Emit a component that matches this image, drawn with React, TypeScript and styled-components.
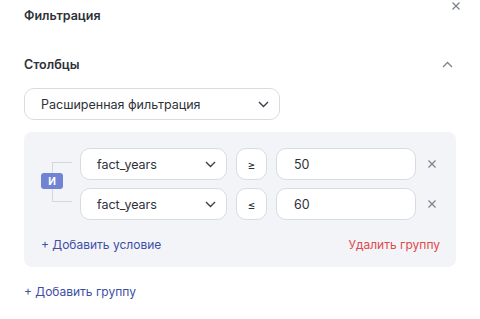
import styled, { createGlobalStyle } from "styled-components";

const GlobalStyle = createGlobalStyle`
  body {
    margin: 0;
    background: #ffffff;
    font-family: Inter, "Noto Sans", sans-serif;
    color: #2e3138;
  }
  * {
    box-sizing: border-box;
  }
`;

const Panel = styled.div`
  width: 480px;
  height: 319px;
  padding: 0 24px;
  display: flex;
  flex-direction: column;
`;

const Header = styled.div`
  display: flex;
  justify-content: space-between;
  align-items: flex-start;
  height: 32px;
`;

const Title = styled.div`
  font-size: 12.5px;
  font-weight: 600;
  line-height: 16px;
  padding-top: 8px;
  color: #2e3138;
`;

const IconButton = styled.button<{ $right?: number; $top?: number }>`
  border: none;
  background: transparent;
  padding: 0;
  margin-top: ${(p) => p.$top ?? 0}px;
  margin-right: ${(p) => p.$right ?? 0}px;
  display: flex;
  align-items: center;
  justify-content: center;
  cursor: pointer;
  color: #7b8290;
`;

const SectionHeader = styled.div`
  display: flex;
  justify-content: space-between;
  align-items: center;
  margin-top: 24px;
  height: 16px;
`;

const SectionTitle = styled.div`
  font-size: 12.5px;
  font-weight: 600;
  color: #2e3138;
`;

const Select = styled.div<{ $width: number }>`
  width: ${(p) => p.$width}px;
  height: 32px;
  border: 1px solid #d7dce4;
  border-radius: 10px;
  background: #fff;
  display: flex;
  align-items: center;
  justify-content: space-between;
  padding: 0 10px 0 16px;
  font-size: 12.5px;
  color: #2e3138;
  flex-shrink: 0;
`;

const ModeSelect = styled(Select)`
  margin-top: 16px;
`;

const Group = styled.div`
  margin-top: 12px;
  background: #f3f4f8;
  border-radius: 8px;
  padding: 16px 20px 14px 17px;
  display: flex;
  flex-direction: column;
`;

const GroupBody = styled.div`
  display: flex;
`;

const BracketCol = styled.div`
  position: relative;
  width: 39px;
  flex-shrink: 0;
`;

const Bracket = styled.div`
  position: absolute;
  left: 11px;
  top: 14px;
  bottom: 18px;
  width: 20px;
  border: 1px solid #d3d7df;
  border-right: none;
`;

const Badge = styled.div`
  position: absolute;
  left: 0;
  top: 25px;
  width: 22px;
  height: 16px;
  border-radius: 3px;
  background: #7184d4;
  color: #fff;
  font-size: 10px;
  font-weight: 700;
  display: flex;
  align-items: center;
  justify-content: center;
`;

const Rows = styled.div`
  display: flex;
  flex-direction: column;
  gap: 8px;
  flex: 1;
`;

const Row = styled.div`
  display: flex;
  align-items: center;
`;

const Operator = styled.div`
  width: 31px;
  height: 32px;
  margin-left: 9px;
  border: 1px solid #d7dce4;
  border-radius: 10px;
  background: #fff;
  display: flex;
  align-items: center;
  justify-content: center;
  font-size: 12px;
  color: #2e3138;
`;

const ValueInput = styled.div`
  width: 140px;
  height: 32px;
  margin-left: 9px;
  border: 1px solid #d7dce4;
  border-radius: 10px;
  background: #fff;
  display: flex;
  align-items: center;
  padding-left: 17px;
  font-size: 12.5px;
  color: #2e3138;
`;

const RemoveRow = styled(IconButton)`
  margin-left: 12px;
`;

const GroupFooter = styled.div`
  display: flex;
  justify-content: space-between;
  align-items: center;
  margin-top: 15px;
  margin-right: -4px;
  height: 18px;
`;

const LinkButton = styled.button<{ $danger?: boolean }>`
  border: none;
  background: transparent;
  padding: 0;
  font-family: inherit;
  font-size: 12px;
  color: ${(p) => (p.$danger ? "#df4a4a" : "#3d4fa6")};
  cursor: pointer;
`;

const AddGroup = styled(LinkButton)`
  align-self: flex-start;
  margin-top: 17px;
`;

const Cross = ({ size = 8 }: { size?: number }) => (
  <svg width={size} height={size} viewBox="0 0 8 8" fill="none">
    <path d="M0.5 0.5L7.5 7.5M7.5 0.5L0.5 7.5" stroke="#7b8290" strokeWidth="1.3" />
  </svg>
);

const ChevronDown = () => (
  <svg width="11" height="7" viewBox="0 0 11 7" fill="none">
    <path d="M1 1L5.5 5.5L10 1" stroke="#3a3f4a" strokeWidth="1.4" />
  </svg>
);

const ChevronUp = () => (
  <svg width="11" height="7" viewBox="0 0 11 7" fill="none">
    <path d="M1 6L5.5 1.5L10 6" stroke="#7b8290" strokeWidth="1.3" />
  </svg>
);

const conditions = [
  { field: "fact_years", op: "≥", value: "50" },
  { field: "fact_years", op: "≤", value: "60" },
];

export default function App() {
  return (
    <>
      <GlobalStyle />
      <Panel>
        <Header>
          <Title>Фильтрация</Title>
          <IconButton $right={-4} $top={2}>
            <Cross />
          </IconButton>
        </Header>

        <SectionHeader>
          <SectionTitle>Столбцы</SectionTitle>
          <IconButton $right={3}>
            <ChevronUp />
          </IconButton>
        </SectionHeader>

        <ModeSelect $width={256}>
          Расширенная фильтрация
          <ChevronDown />
        </ModeSelect>

        <Group>
          <GroupBody>
            <BracketCol>
              <Bracket />
              <Badge>И</Badge>
            </BracketCol>
            <Rows>
              {conditions.map((c, i) => (
                <Row key={i}>
                  <Select $width={147}>
                    {c.field}
                    <ChevronDown />
                  </Select>
                  <Operator>{c.op}</Operator>
                  <ValueInput>{c.value}</ValueInput>
                  <RemoveRow>
                    <Cross />
                  </RemoveRow>
                </Row>
              ))}
            </Rows>
          </GroupBody>
          <GroupFooter>
            <LinkButton>+ Добавить условие</LinkButton>
            <LinkButton $danger>Удалить группу</LinkButton>
          </GroupFooter>
        </Group>

        <AddGroup>+ Добавить группу</AddGroup>
      </Panel>
    </>
  );
}
